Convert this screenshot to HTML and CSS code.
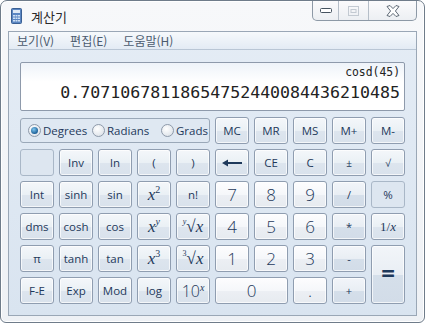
FILE: index.html
```html
<!DOCTYPE html>
<html lang="ko">
<head>
  <meta charset="UTF-8" />
  <title>계산기</title>
  <link rel="stylesheet" href="styles.css">
</head>
<body>
  <div class="window">
    <div class="titlebar">
      <svg class="app-icon" width="11" height="16" viewBox="0 0 11 16">
        <rect x="0.5" y="0.5" width="10" height="15" rx="1" fill="#5b86c2" stroke="#3a5f93"/>
        <rect x="2" y="2" width="7" height="3" fill="#dfe9f5"/>
        <g fill="#cfe0f3">
          <rect x="2" y="7" width="2" height="1.5"/><rect x="4.5" y="7" width="2" height="1.5"/><rect x="7" y="7" width="2" height="1.5"/>
          <rect x="2" y="9.5" width="2" height="1.5"/><rect x="4.5" y="9.5" width="2" height="1.5"/><rect x="7" y="9.5" width="2" height="1.5"/>
          <rect x="2" y="12" width="2" height="1.5"/><rect x="4.5" y="12" width="2" height="1.5"/><rect x="7" y="12" width="2" height="1.5"/>
        </g>
      </svg>
      <span class="title">계산기</span>
      <div class="caption">
        <div class="cap cap-min">
          <svg width="12" height="6" viewBox="0 0 12 6"><rect x="0.5" y="0.5" width="11" height="4" rx="1" fill="#fff" stroke="#45525f"/></svg>
        </div>
        <div class="cap cap-max">
          <svg width="11" height="10" viewBox="0 0 11 10"><rect x="0.5" y="0.5" width="10" height="9" fill="none" stroke="#c3cad2"/><rect x="3" y="3.5" width="5" height="3" fill="none" stroke="#c3cad2"/></svg>
        </div>
        <div class="cap cap-close">
          <svg width="14" height="12" viewBox="0 0 14 12"><path d="M1 1.5 L4 0.5 L7 3.6 L10 0.5 L13 1.5 L9.4 6 L13 10.5 L10 11.5 L7 8.4 L4 11.5 L1 10.5 L4.6 6 Z" fill="#fff" stroke="#4d5966" stroke-width="0.9" stroke-linejoin="round"/></svg>
        </div>
      </div>
    </div>

    <div class="client">
      <div class="menubar">
        <span class="menu-item">보기(V)</span>
        <span class="menu-item">편집(E)</span>
        <span class="menu-item">도움말(H)</span>
      </div>

      <div class="content">
        <div class="display">
          <div class="expr">cosd(45)</div>
          <div class="value">0.70710678118654752440084436210485</div>
        </div>

        <div class="keypad">
          <div class="angles">
            <label class="radio deg"><span class="dot checked"></span>Degrees</label>
            <label class="radio rad"><span class="dot"></span>Radians</label>
            <label class="radio"><span class="dot"></span>Grads</label>
          </div>
          <button class="key">MC</button>
          <button class="key">MR</button>
          <button class="key">MS</button>
          <button class="key">M+</button>
          <button class="key">M-</button>

          <button class="key flat"></button>
          <button class="key">Inv</button>
          <button class="key">ln</button>
          <button class="key">(</button>
          <button class="key">)</button>
          <button class="key">
            <svg width="20" height="8" viewBox="0 0 20 8"><path d="M0 4 L6 0.5 L6 3 L20 3 L20 5 L6 5 L6 7.5 Z" fill="#1e395b"/></svg>
          </button>
          <button class="key">CE</button>
          <button class="key">C</button>
          <button class="key small">±</button>
          <button class="key small">√</button>

          <button class="key">Int</button>
          <button class="key">sinh</button>
          <button class="key">sin</button>
          <button class="key math"><span><i>x</i><sup>2</sup></span></button>
          <button class="key">n!</button>
          <button class="key num">7</button>
          <button class="key num">8</button>
          <button class="key num">9</button>
          <button class="key op">/</button>
          <button class="key flat">%</button>

          <button class="key">dms</button>
          <button class="key">cosh</button>
          <button class="key">cos</button>
          <button class="key math"><span><i>x</i><sup><i>y</i></sup></span></button>
          <button class="key math"><span><sup class="idx"><i>y</i></sup>√<i>x</i></span></button>
          <button class="key num">4</button>
          <button class="key num">5</button>
          <button class="key num">6</button>
          <button class="key op">*</button>
          <button class="key frac"><span>1/<i>x</i></span></button>

          <button class="key">π</button>
          <button class="key">tanh</button>
          <button class="key">tan</button>
          <button class="key math"><span><i>x</i><sup>3</sup></span></button>
          <button class="key math"><span><sup class="idx">3</sup>√<i>x</i></span></button>
          <button class="key num">1</button>
          <button class="key num">2</button>
          <button class="key num">3</button>
          <button class="key op">-</button>
          <button class="key op equals">=</button>

          <button class="key">F-E</button>
          <button class="key">Exp</button>
          <button class="key">Mod</button>
          <button class="key">log</button>
          <button class="key ten"><span>10<sup><i>x</i></sup></span></button>
          <button class="key num zero">0</button>
          <button class="key num">.</button>
          <button class="key op">+</button>
        </div>
      </div>
    </div>
  </div>
</body>
</html>
```

FILE: styles.css
```css
body {
  margin: 0;
  background: #ffffff;
  font-family: "Open Sans", "Noto Sans", sans-serif;
}
.window {
  box-sizing: border-box;
  width: 425px;
  height: 323px;
  border: 1px solid #6f7c8a;
  border-radius: 7px 7px 6px 6px;
  background: linear-gradient(#f7f8fa, #eef1f5);
  box-shadow: inset 0 0 0 1px #ffffff;
  display: flex;
  flex-direction: column;
}
.titlebar {
  height: 29px;
  display: flex;
  align-items: flex-start;
  padding-left: 10px;
  padding-right: 7px;
}
.app-icon {
  margin-top: 7px;
}
.title {
  margin-left: 9px;
  margin-top: 6px;
  font-family: "Noto Sans CJK KR", sans-serif;
  font-size: 13px;
  color: #2a2a2a;
}
.caption {
  margin-left: auto;
  display: flex;
  height: 19px;
  border: 1px solid #8d99a6;
  border-top: none;
  border-radius: 0 0 5px 5px;
  background: linear-gradient(#fbfbfc, #eceff3);
  overflow: hidden;
}
.cap {
  display: flex;
  align-items: center;
  justify-content: center;
}
.cap-min {
  width: 25px;
  border-right: 1px solid #b5bec8;
}
.cap-max {
  width: 29px;
  border-right: 1px solid #b5bec8;
}
.cap-close {
  width: 47px;
}
.client {
  margin: 1px 7px 0;
  height: 283px;
  border: 1px solid #9aa7b6;
  background: linear-gradient(#e4ecf5, #d9e4f0);
  display: flex;
  flex-direction: column;
}
.menubar {
  height: 17px;
  border-bottom: 1px solid #b9c6d5;
  background: linear-gradient(#f6f9fc, #e3ebf4);
  display: flex;
  align-items: center;
  padding-left: 0.5px;
}
.menu-item {
  font-family: "Noto Sans CJK KR", sans-serif;
  font-size: 12px;
  color: #4b5b6e;
  padding: 0 7.5px;
  margin-right: 1px;
}
.content {
  padding: 12px 11px 9px;
}
.display {
  box-sizing: border-box;
  height: 49px;
  border: 1px solid #8e9aab;
  border-radius: 2px;
  background: linear-gradient(#eef3f9, #ffffff 40%);
  padding: 2px 4px 0;
  text-align: right;
  font-family: "DejaVu Sans Mono", monospace;
  color: #222222;
}
.expr {
  font-size: 11.4px;
  line-height: 15px;
}
.value {
  font-size: 16.6px;
  line-height: 26px;
}
.keypad {
  margin-top: 6px;
  display: grid;
  grid-template-columns: repeat(10, 34px);
  grid-auto-rows: 27px;
  gap: 5px;
}
.angles {
  grid-column: 1 / 6;
  border: 1px solid #9aa8b8;
  border-radius: 3px;
  background: #dfe8f2;
  display: flex;
  align-items: center;
  padding: 0 0 0 7px;
  margin: 1px 0;
}
.radio {
  display: flex;
  align-items: center;
  font-size: 11.5px;
  color: #1e395b;
}
.radio.deg {
  width: 64px;
}
.radio.rad {
  width: 69px;
}
.dot {
  box-sizing: border-box;
  width: 13px;
  height: 13px;
  border-radius: 50%;
  border: 1px solid #8e9aaa;
  background: radial-gradient(circle at 40% 35%, #ffffff, #d5dce4);
  margin-right: 2px;
  display: flex;
  align-items: center;
  justify-content: center;
}
.dot.checked::after {
  content: "";
  width: 7px;
  height: 7px;
  border-radius: 50%;
  background: radial-gradient(circle at 40% 35%, #7fc7f0, #1c5f97 70%);
}
.key {
  box-sizing: border-box;
  border: 1px solid #8f9db0;
  border-radius: 3px;
  background: linear-gradient(#f4f7fa, #eaf0f5 50%, #dde5ee 51%, #d9e2ec);
  box-shadow: inset 0 0 0 1px rgba(255, 255, 255, 0.7);
  font-family: "Open Sans", "Noto Sans", sans-serif;
  font-size: 11.5px;
  color: #1e395b;
  padding: 0;
  display: flex;
  align-items: center;
  justify-content: center;
}
.key.small {
  font-size: 10px;
}
.key.flat {
  background: #dde6f0;
  border-color: #a9b7c7;
  box-shadow: none;
}
.key.num {
  background: linear-gradient(#fdfdfe, #f5f7fa 50%, #eceff4 51%, #e7ebf0);
  font-size: 17px;
  font-weight: 300;
}
.key.op {
  background: linear-gradient(#f2f5f9, #e9eef4 50%, #d5dfea 51%, #d2dce8);
  font-size: 11px;
}
.key.zero {
  grid-column: span 2;
}
.key.equals {
  grid-row: span 2;
  font-size: 24px;
  font-weight: 700;
  padding-bottom: 4px;
}
.key.math {
  font-family: "Liberation Serif", "DejaVu Serif", serif;
  font-size: 17px;
}
.key sup {
  font-size: 10px;
  vertical-align: 7px;
  line-height: 0;
}
.key sup.idx {
  font-size: 8px;
  vertical-align: 8px;
  margin-right: 0;
}
.key.frac {
  font-family: "Liberation Serif", "DejaVu Serif", serif;
  font-size: 13px;
}
.key.ten {
  font-size: 16px;
  font-weight: 300;
}
.key.ten sup {
  font-family: "Liberation Serif", "DejaVu Serif", serif;
  font-size: 10px;
  vertical-align: 6px;
}
```
